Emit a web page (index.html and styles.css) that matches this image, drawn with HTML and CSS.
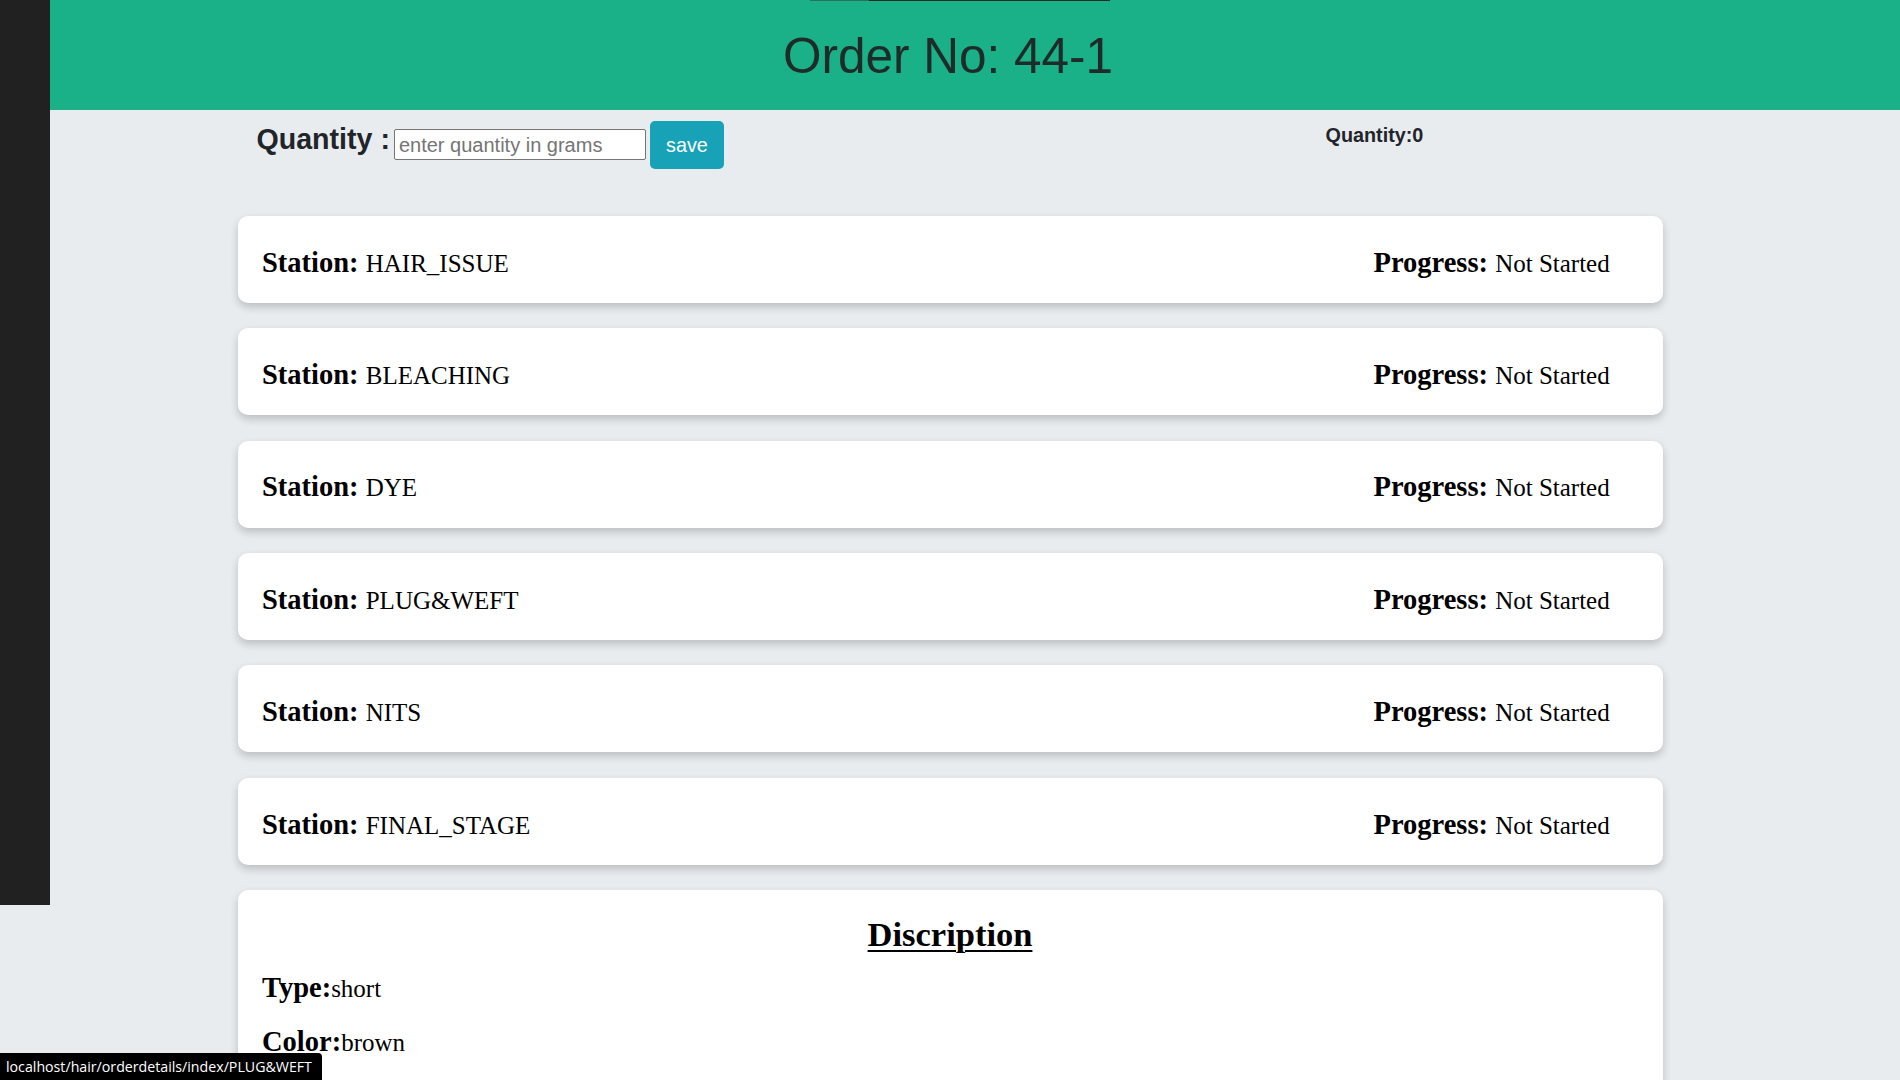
FILE: index.html
```html
<!DOCTYPE html>
<html lang="en">
<head>
<meta charset="utf-8">
<title>Order Details</title>
<link rel="stylesheet" href="styles.css">
</head>
<body>
<aside class="sidebar"></aside>
<header class="topbar">
  <h1 class="title">Order No: 44-1</h1>
</header>
<main class="content">
  <div class="qty-row">
    <div class="qty-form">
      <label class="qty-label" for="qty">Quantity :</label>
      <input id="qty" class="qty-input" type="text" placeholder="enter quantity in grams">
      <button class="save-btn" type="button">save</button>
    </div>
    <div class="qty-total">Quantity:0</div>
  </div>

  <section class="card station">
    <div class="cell"><span class="lbl">Station:</span> <span class="val">HAIR_ISSUE</span></div>
    <div class="cell progress"><span class="lbl">Progress:</span> <span class="val">Not Started</span></div>
  </section>
  <section class="card station">
    <div class="cell"><span class="lbl">Station:</span> <span class="val">BLEACHING</span></div>
    <div class="cell progress"><span class="lbl">Progress:</span> <span class="val">Not Started</span></div>
  </section>
  <section class="card station">
    <div class="cell"><span class="lbl">Station:</span> <span class="val">DYE</span></div>
    <div class="cell progress"><span class="lbl">Progress:</span> <span class="val">Not Started</span></div>
  </section>
  <section class="card station">
    <div class="cell"><span class="lbl">Station:</span> <span class="val">PLUG&amp;WEFT</span></div>
    <div class="cell progress"><span class="lbl">Progress:</span> <span class="val">Not Started</span></div>
  </section>
  <section class="card station">
    <div class="cell"><span class="lbl">Station:</span> <span class="val">NITS</span></div>
    <div class="cell progress"><span class="lbl">Progress:</span> <span class="val">Not Started</span></div>
  </section>
  <section class="card station">
    <div class="cell"><span class="lbl">Station:</span> <span class="val">FINAL_STAGE</span></div>
    <div class="cell progress"><span class="lbl">Progress:</span> <span class="val">Not Started</span></div>
  </section>

  <section class="card desc">
    <h2 class="desc-title">Discription</h2>
    <p class="desc-line first"><span class="lbl">Type:</span><span class="val">short</span></p>
    <p class="desc-line"><span class="lbl">Color:</span><span class="val">brown</span></p>
    <p class="desc-line"><span class="lbl">Length:</span><span class="val">10</span></p>
  </section>
</main>
<div class="statusbar">localhost/hair/orderdetails/index/PLUG&amp;WEFT</div>
</body>
</html>
```

FILE: styles.css
```css
html, body {
  margin: 0;
  padding: 0;
}

body {
  background: #e9ecef;
  font-family: "Liberation Serif", "Times New Roman", serif;
  color: #000;
}

.sidebar {
  position: fixed;
  left: 0;
  top: 0;
  width: 50px;
  height: 905px;
  background: #212121;
  z-index: 5;
}

.topbar {
  position: relative;
  height: 110px;
  background: #1ab188;
  display: flex;
  align-items: center;
  justify-content: center;
}

.topbar::before {
  content: "";
  position: absolute;
  top: 0;
  left: 810px;
  width: 300px;
  height: 1px;
  background: linear-gradient(to right, #2f6d5d 0, #2f6d5d 59px, #1c2b28 59px);
}

.title {
  margin: 0 0 0 -4px;
  font-family: "Liberation Sans", Arial, sans-serif;
  font-weight: 400;
  font-size: 49.5px;
  line-height: 49px;
  color: #1e2b28;
}

.content {
  padding-bottom: 40px;
}

.qty-row {
  width: 75%;
  margin: 10.7px auto 0;
  display: grid;
  grid-template-columns: 1088px 1fr;
  align-items: start;
  font-family: "Liberation Sans", Arial, sans-serif;
}

.qty-form {
  display: flex;
  align-items: center;
  padding-left: 19px;
  height: 48px;
}

.qty-label {
  font-weight: 700;
  font-size: 28.6px;
  line-height: 31px;
  color: #212529;
  margin-bottom: 11px;
  margin-right: 4px;
}

.qty-input {
  box-sizing: border-box;
  width: 252px;
  height: 31px;
  margin: 0 4px 0 0;
  padding: 1px 4px 0;
  border: 1px solid #767676;
  border-radius: 2px;
  background: #fff;
  font-family: "Liberation Sans", Arial, sans-serif;
  font-size: 20px;
  color: #212529;
}

.qty-input::placeholder {
  color: #757575;
}

.save-btn {
  box-sizing: border-box;
  width: 74px;
  height: 48px;
  padding: 0;
  border: 0;
  border-radius: 5px;
  background: #17a2b8;
  color: #fff;
  font-family: "Liberation Sans", Arial, sans-serif;
  font-size: 19.8px;
  line-height: 48px;
}

.qty-total {
  margin-top: 3.2px;
  font-weight: 700;
  font-size: 19.8px;
  line-height: 23px;
  color: #212529;
}

.card {
  box-sizing: border-box;
  width: 75%;
  margin: 0 auto;
  background: #fff;
  border-radius: 10px;
  box-shadow: 0 4px 8px rgba(0, 0, 0, 0.2);
}

.station {
  display: flex;
  align-items: baseline;
  height: 87px;
  padding: 30.8px 0 0 24.5px;
  margin-bottom: 25.4px;
  line-height: 32px;
}

.qty-row + .station {
  margin-top: 47.2px;
}

.cell {
  flex: 1;
  white-space: nowrap;
  font-size: 28.5px;
}

.cell.progress {
  flex: 0 0 289px;
}

.lbl {
  font-weight: 700;
  font-size: 28.5px;
}

.val {
  font-size: 25px;
}

.desc {
  padding: 23.5px 24.5px 30px;
}

.desc-title {
  margin: 0;
  text-align: center;
  font-size: 34.5px;
  line-height: 40px;
  font-weight: 700;
  text-decoration: underline;
  text-decoration-thickness: 2px;
  text-underline-offset: 4px;
}

.desc-line {
  margin: 18px 0 0;
  line-height: 32px;
}

.desc-line.first {
  margin-top: 18.5px;
}

.statusbar {
  position: fixed;
  left: 0;
  bottom: 0;
  height: 27px;
  padding: 0 10px 0 6px;
  background: #000;
  color: #fff;
  border-top-right-radius: 4px;
  font-family: "Open Sans", "Noto Sans", sans-serif;
  font-size: 14.2px;
  line-height: 27px;
  white-space: nowrap;
  z-index: 10;
}
```
